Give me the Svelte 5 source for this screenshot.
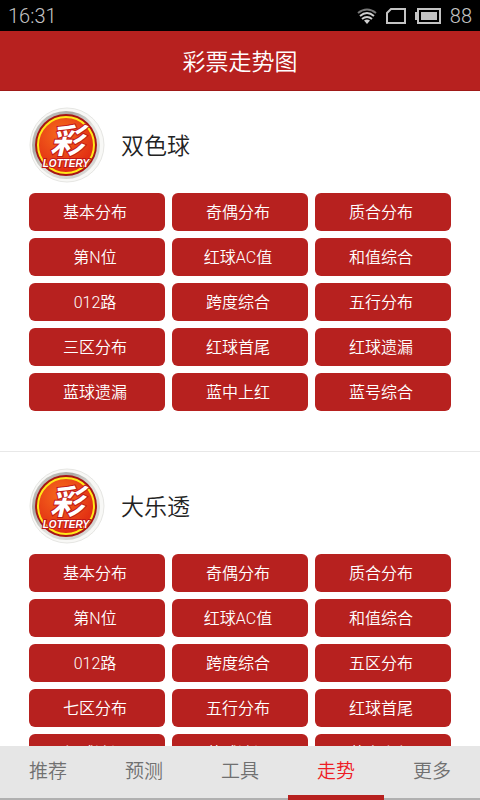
<script>
    const lotteries = [
        {
            name: "双色球",
            charts: [
                "基本分布", "奇偶分布", "质合分布",
                "第N位", "红球AC值", "和值综合",
                "012路", "跨度综合", "五行分布",
                "三区分布", "红球首尾", "红球遗漏",
                "蓝球遗漏", "蓝中上红", "蓝号综合"
            ]
        },
        {
            name: "大乐透",
            charts: [
                "基本分布", "奇偶分布", "质合分布",
                "第N位", "红球AC值", "和值综合",
                "012路", "跨度综合", "五区分布",
                "七区分布", "五行分布", "红球首尾",
                "红球遗漏", "蓝球遗漏", "蓝中上红"
            ]
        }
    ];

    const tabs = ["推荐", "预测", "工具", "走势", "更多"];
    let active = "走势";
</script>

<div class="app">
    <div class="status">
        <span>16:31</span>
        <div class="indicators">
            <svg class="wifi" viewBox="0 0 20 16" width="20" height="16" fill="none" stroke-width="2">
                <path d="M1 5 Q10 -2 19 5" stroke="#777" />
                <path d="M3 8 Q10 2 17 8" stroke="#d0d0d0" />
                <path d="M5 11 Q10 7 15 11" stroke="#d0d0d0" />
                <path d="M7 12.5 Q10 10.5 13 12.5 L10 16 Z" fill="#d0d0d0" />
            </svg>
            <svg class="sim" viewBox="0 0 20 16" width="20" height="16">
                <path d="M5 1 H19 V15 H1 V5 Z" fill="none" stroke="#c4c4c4" stroke-width="2" />
            </svg>
            <svg class="battery" viewBox="0 0 26 16" width="26" height="16">
                <rect x="3" y="1" width="22" height="14" fill="none" stroke="#c4c4c4" stroke-width="2" />
                <rect x="0" y="4" width="2" height="8" fill="#c4c4c4" />
                <rect x="6" y="4" width="16" height="8" fill="#c4c4c4" />
            </svg>
            <span>88</span>
        </div>
    </div>

    <header>
        <h1>彩票走势图</h1>
    </header>

    <main>
        {#each lotteries as lottery}
            <section>
                <div class="title">
                    <svg class="logo" viewBox="0 0 76 76" width="76" height="76" aria-hidden="true">
                        <defs>
                            <linearGradient id="rim" x1="0" y1="0" x2="1" y2="1">
                                <stop offset="0" stop-color="#d8d8d4" />
                                <stop offset="0.3" stop-color="#a9a9a4" />
                                <stop offset="0.55" stop-color="#e2e2de" />
                                <stop offset="0.8" stop-color="#d0d0cc" />
                                <stop offset="1" stop-color="#f4f4f4" />
                            </linearGradient>
                            <radialGradient id="face" cx="0.4" cy="0.3" r="0.7">
                                <stop offset="0" stop-color="#f66a1c" />
                                <stop offset="1" stop-color="#e02a12" />
                            </radialGradient>
                        </defs>
                        <circle cx="38" cy="38" r="37" fill="#f8f8f6" stroke="#e6e6e3" />
                        <circle cx="37" cy="38" r="34" fill="url(#rim)" />
                        <circle cx="37" cy="38" r="31" fill="#a81414" />
                        <circle cx="37" cy="38" r="28" fill="url(#face)" stroke="#ffe81a" stroke-width="2" />
                        <text class="glyph" x="38" y="46" text-anchor="middle">彩</text>
                        <text class="word" x="37" y="60" text-anchor="middle">LOTTERY</text>
                    </svg>
                    <h2>{lottery.name}</h2>
                </div>
                <div class="charts">
                    {#each lottery.charts as chart}
                        <button type="button">{chart}</button>
                    {/each}
                </div>
            </section>
        {/each}
    </main>

    <nav>
        {#each tabs as tab}
            <button type="button" class:active={tab === active} on:click={() => active = tab}>{tab}</button>
        {/each}
    </nav>
</div>

<style>
    :global(body) {
        margin: 0;
        background: #fff;
    }
    .app {
        display: flex;
        flex-direction: column;
        height: 100vh;
        overflow: hidden;
        font-family: Roboto, 'Noto Sans CJK SC', sans-serif;
        font-weight: 350;
    }
    .status {
        display: flex;
        flex: none;
        align-items: center;
        justify-content: space-between;
        height: 31px;
        padding: 0 8px;
        background: #000;
        color: #c4c4c4;
        font-size: 20px;
        font-weight: 300;
    }
    .indicators {
        display: flex;
        align-items: center;
        gap: 9px;
    }
    header {
        display: flex;
        flex: none;
        align-items: center;
        justify-content: center;
        height: 60px;
        padding-bottom: 2px;
        background: #b7211f;
        border-bottom: 1px solid #a01a18;
        box-sizing: border-box;
    }
    h1 {
        margin: 0;
        color: #fff;
        font-size: 23px;
        font-weight: 350;
    }
    main {
        flex: 1;
        min-height: 0;
        overflow-y: auto;
        scrollbar-width: none;
    }
    section {
        padding: 16px 29px 40px;
        border-bottom: 1px solid #e8e8e8;
    }
    .title {
        display: flex;
        align-items: center;
        gap: 16px;
        height: 76px;
        margin-bottom: 10px;
    }
    h2 {
        margin: 0;
        padding-bottom: 2px;
        color: #222;
        font-size: 23px;
        font-weight: 350;
    }
    .glyph {
        fill: #fff;
        stroke: #c01818;
        stroke-width: 2px;
        paint-order: stroke;
        font-family: 'Noto Sans CJK SC', sans-serif;
        font-size: 34px;
        font-style: italic;
        font-weight: 700;
    }
    .word {
        fill: #fff;
        stroke: #c01818;
        stroke-width: 2px;
        paint-order: stroke;
        font-family: 'Liberation Sans', sans-serif;
        font-size: 10px;
        font-style: italic;
        font-weight: 700;
    }
    .charts {
        display: grid;
        grid-template-columns: repeat(3, 1fr);
        gap: 7px;
    }
    .charts button {
        height: 38px;
        padding: 0 4px 2px 0;
        border: none;
        border-radius: 6px;
        background: #b7211f;
        color: #fff;
        font: inherit;
        font-size: 16px;
    }
    nav {
        display: flex;
        flex: none;
        height: 54px;
        background: #e6e6e6;
        box-shadow: inset 0 -2px #b0b0b0;
    }
    nav button {
        flex: 1;
        padding: 0 0 2px;
        border: none;
        border-bottom: 5px solid transparent;
        background: none;
        color: #707070;
        font: inherit;
        font-size: 19px;
    }
    nav .active {
        border-bottom-color: #b7211f;
        color: #ee1c25;
    }
</style>
